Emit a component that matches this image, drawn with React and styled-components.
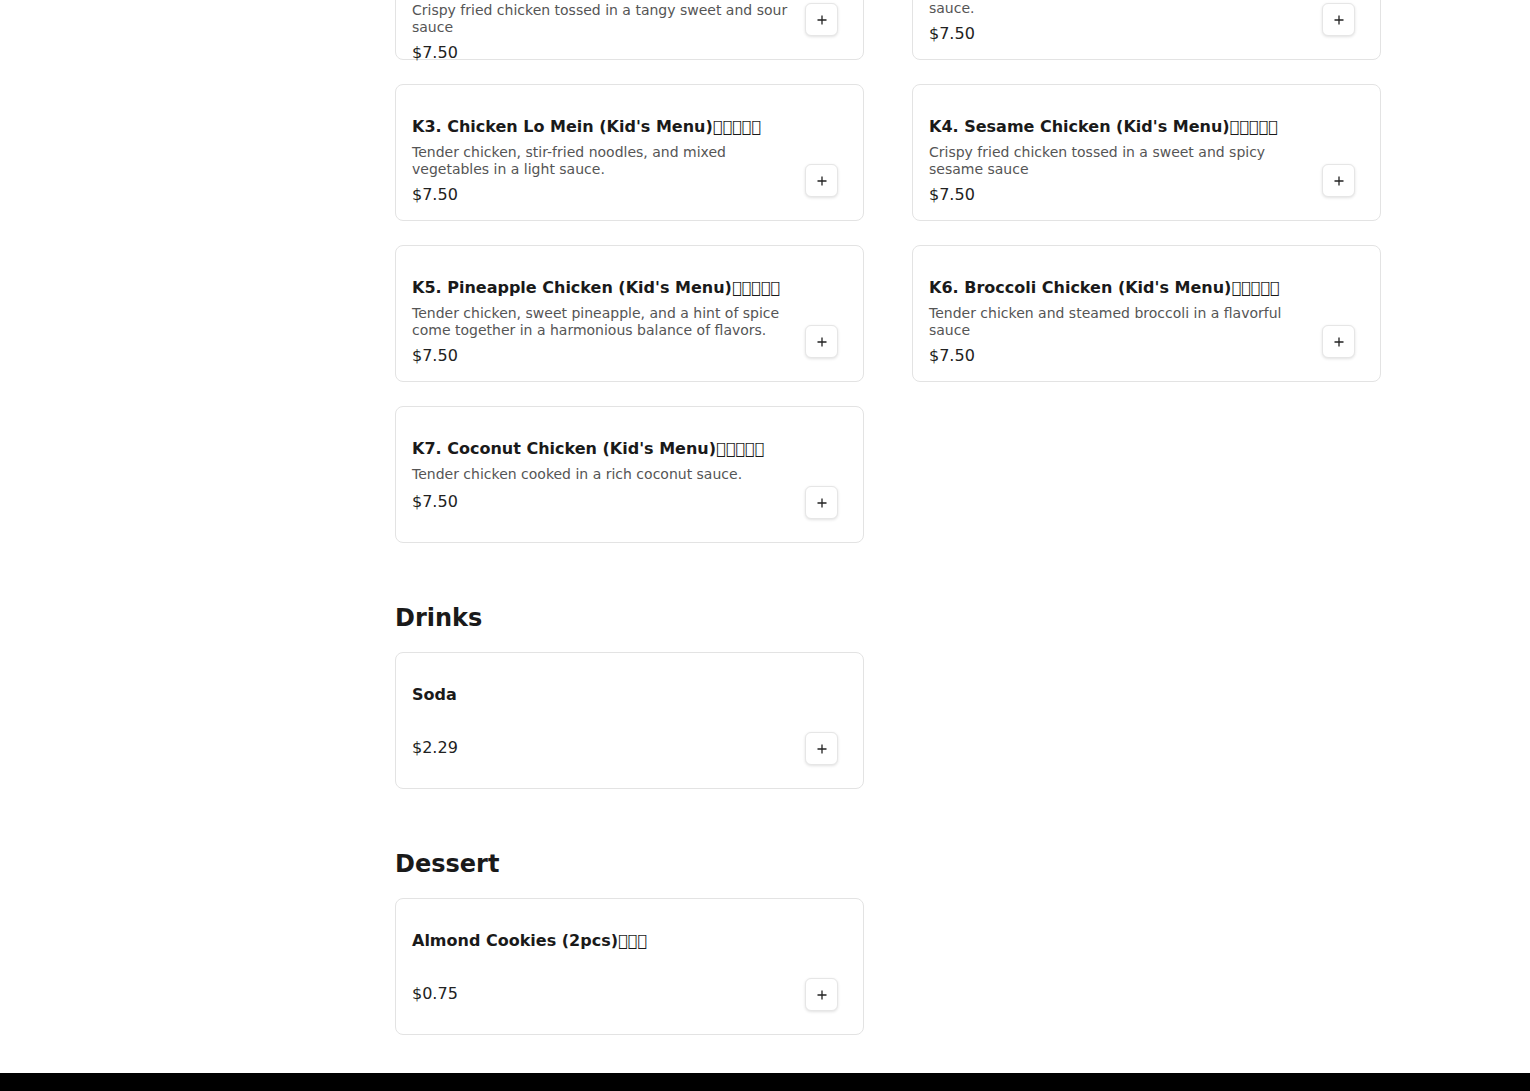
import React from "react";
import styled, { createGlobalStyle } from "styled-components";

const Global = createGlobalStyle`
  html, body { margin: 0; padding: 0; background: #ffffff; }
  body { font-family: "DejaVu Sans", sans-serif; color: #1a1a1a; }
  * { box-sizing: border-box; }
`;

const Viewport = styled.div`
  height: 1091px;
  overflow: hidden;
  display: flex;
  flex-direction: column;
`;

const Scrolled = styled.div`
  margin-top: -77px;
  display: flex;
  flex-direction: column;
`;

const Container = styled.div`
  width: 1280px;
  margin: 0 auto;
  padding: 0 24px;
  display: grid;
  grid-template-columns: 222px 1fr;
  gap: 24px;
`;

const Sidebar = styled.aside``;

const Main = styled.main`
  display: flex;
  flex-direction: column;
`;

const Section = styled.section`
  padding-top: ${(p) => (p.$first ? "0" : "61px")};
`;

const SectionTitle = styled.h2`
  margin: 0 0 20px;
  font-size: 24px;
  font-weight: 700;
  color: #1a1a1a;
  line-height: normal;
`;

const Grid = styled.div`
  display: grid;
  grid-template-columns: 1fr 1fr;
  column-gap: 48px;
  row-gap: 24px;
`;

const Card = styled.div`
  height: 137px;
  border: 1px solid #e3e3e3;
  border-radius: 8px;
  background: #fff;
  padding: 32px 25px 16px 16px;
  display: flex;
  align-items: flex-start;
  gap: 16px;
`;

const Info = styled.div`
  flex: 1;
  min-width: 0;
  display: flex;
  flex-direction: column;
  & > * { flex: none; }
`;

const Name = styled.h3`
  margin: 0;
  font-size: 16px;
  font-weight: 700;
  color: #1a1a1a;
  line-height: normal;
`;

const Desc = styled.p`
  margin: 8px 0 0;
  min-height: 19px;
  font-size: 14px;
  line-height: 17px;
  color: #555555;
`;

const Price = styled.div`
  margin-top: 7px;
  font-size: 16px;
  line-height: normal;
  color: #222222;
`;

const AddButton = styled.button`
  flex: none;
  margin-top: 47px;
  width: 33px;
  height: 33px;
  border: 1px solid #e6e6e6;
  border-radius: 6px;
  background: #fff;
  box-shadow: 0 1px 3px rgba(0, 0, 0, 0.12);
  display: flex;
  align-items: center;
  justify-content: center;
  padding: 0;
  cursor: pointer;
  color: #222;
`;

const Footer = styled.footer`
  margin-top: 38px;
  height: 200px;
  background: #000;
`;

const Plus = () => (
  <svg width="10" height="10" viewBox="0 0 10 10" aria-hidden="true">
    <path d="M5 0.5v9M0.5 5h9" stroke="currentColor" strokeWidth="1.3" />
  </svg>
);

const T = "\uE000";
const tofu = (n) => T.repeat(n);

const MenuCard = ({ name, desc, price }) => (
  <Card>
    <Info>
      <Name>{name}</Name>
      <Desc>{desc}</Desc>
      <Price>{price}</Price>
    </Info>
    <AddButton aria-label="Add">
      <Plus />
    </AddButton>
  </Card>
);

const kids = [
  {
    name: "K1. Sweet and Sour Chicken (Kid's Menu)" + tofu(5),
    desc: "Crispy fried chicken tossed in a tangy sweet and sour sauce",
    price: "$7.50",
  },
  {
    name: "K2. Orange Chicken (Kid's Menu)" + tofu(5),
    desc: "Crispy fried chicken tossed in a sweet tangy orange sauce.",
    price: "$7.50",
  },
  {
    name: "K3. Chicken Lo Mein (Kid's Menu)" + tofu(5),
    desc: "Tender chicken, stir-fried noodles, and mixed vegetables in a light sauce.",
    price: "$7.50",
  },
  {
    name: "K4. Sesame Chicken (Kid's Menu)" + tofu(5),
    desc: "Crispy fried chicken tossed in a sweet and spicy sesame sauce",
    price: "$7.50",
  },
  {
    name: "K5. Pineapple Chicken (Kid's Menu)" + tofu(5),
    desc: "Tender chicken, sweet pineapple, and a hint of spice come together in a harmonious balance of flavors.",
    price: "$7.50",
  },
  {
    name: "K6. Broccoli Chicken (Kid's Menu)" + tofu(5),
    desc: "Tender chicken and steamed broccoli in a flavorful sauce",
    price: "$7.50",
  },
  {
    name: "K7. Coconut Chicken (Kid's Menu)" + tofu(5),
    desc: "Tender chicken cooked in a rich coconut sauce.",
    price: "$7.50",
  },
];

const sections = [
  {
    title: "Drinks",
    items: [{ name: "Soda", desc: "", price: "$2.29" }],
  },
  {
    title: "Dessert",
    items: [{ name: "Almond Cookies (2pcs)" + tofu(3), desc: "", price: "$0.75" }],
  },
];

export default function App() {
  return (
    <>
      <Global />
      <Viewport>
        <Scrolled>
          <Container>
            <Sidebar />
            <Main>
              <Section $first>
                <Grid>
                  {kids.map((it) => (
                    <MenuCard key={it.name} {...it} />
                  ))}
                </Grid>
              </Section>
              {sections.map((s) => (
                <Section key={s.title}>
                  <SectionTitle>{s.title}</SectionTitle>
                  <Grid>
                    {s.items.map((it) => (
                      <MenuCard key={it.name} {...it} />
                    ))}
                  </Grid>
                </Section>
              ))}
            </Main>
          </Container>
          <Footer />
        </Scrolled>
      </Viewport>
    </>
  );
}
